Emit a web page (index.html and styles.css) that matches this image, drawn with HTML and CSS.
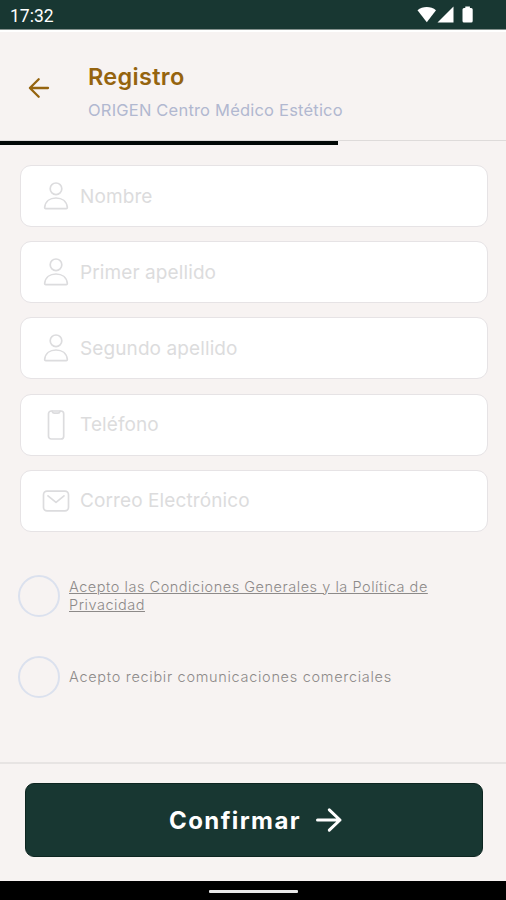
FILE: index.html
```html
<!DOCTYPE html>
<html lang="es">
	<head>
		<meta charset="UTF-8" />
		<meta name="viewport" content="width=device-width, initial-scale=1.0" />
		<title>Registro</title>
		<link rel="stylesheet" href="styles.css">
	</head>
	<body>
		<div class="status-bar">
			<span class="clock">17:32</span>
			<svg class="status-icons" width="57" height="18" viewBox="0 0 57 18">
				<path d="M0.5 4.2C5.5 0 14 0 19 4.2L9.8 16.3Z" />
				<path d="M20.5 16.5L36.5 0.6V16.5Z" />
				<path d="M45.5 3.5a1.5 1.5 0 0 1 1.5-1.5h1.3V0.6h4.6V2h1.3a1.5 1.5 0 0 1 1.5 1.5V15a1.5 1.5 0 0 1-1.5 1.5H47a1.5 1.5 0 0 1-1.5-1.5Z" />
			</svg>
		</div>

		<header class="header">
			<a class="back" href="#" aria-label="Volver">
				<svg width="22" height="22" viewBox="0 0 22 22">
					<path d="M20 11H2M10.7 2.2L1.9 11L10.7 19.8" />
				</svg>
			</a>
			<div class="header-text">
				<h1>Registro</h1>
				<p>ORIGEN Centro Médico Estético</p>
			</div>
		</header>
		<div class="progress"><div class="progress-bar"></div></div>

		<form id="register-form" class="form">
			<label class="field">
				<svg class="icon" width="28" height="32" viewBox="0 0 28 32">
					<circle cx="14" cy="8.8" r="5.8" />
					<path d="M3.8 28.6H24.2Q25.4 28.6 25.3 27.2C24.6 21.4 20 18 14 18S3.4 21.4 2.7 27.2Q2.6 28.6 3.8 28.6Z" />
				</svg>
				<input type="text" placeholder="Nombre" />
			</label>
			<label class="field">
				<svg class="icon" width="28" height="32" viewBox="0 0 28 32">
					<circle cx="14" cy="8.8" r="5.8" />
					<path d="M3.8 28.6H24.2Q25.4 28.6 25.3 27.2C24.6 21.4 20 18 14 18S3.4 21.4 2.7 27.2Q2.6 28.6 3.8 28.6Z" />
				</svg>
				<input type="text" placeholder="Primer apellido" />
			</label>
			<label class="field">
				<svg class="icon" width="28" height="32" viewBox="0 0 28 32">
					<circle cx="14" cy="8.8" r="5.8" />
					<path d="M3.8 28.6H24.2Q25.4 28.6 25.3 27.2C24.6 21.4 20 18 14 18S3.4 21.4 2.7 27.2Q2.6 28.6 3.8 28.6Z" />
				</svg>
				<input type="text" placeholder="Segundo apellido" />
			</label>
			<label class="field">
				<svg class="icon" width="28" height="32" viewBox="0 0 28 32">
					<rect x="6.5" y="2" width="15.2" height="28" rx="2.8" />
					<path d="M10 2.2Q10.8 4.2 12.3 4.2H15.9Q17.4 4.2 18.2 2.2" />
				</svg>
				<input type="tel" placeholder="Teléfono" />
			</label>
			<label class="field">
				<svg class="icon" width="28" height="32" viewBox="0 0 28 32">
					<rect x="1.5" y="6.2" width="25" height="19.6" rx="3.5" />
					<path d="M6 10.8L14 17.3L22 10.8" />
				</svg>
				<input type="email" placeholder="Correo Electrónico" />
			</label>

			<div class="check-row terms">
				<input type="checkbox" id="terms" />
				<label for="terms">Acepto las Condiciones Generales y la Política de<br />Privacidad</label>
			</div>
			<div class="check-row">
				<input type="checkbox" id="news" />
				<label for="news">Acepto recibir comunicaciones comerciales</label>
			</div>
		</form>

		<div class="footer">
			<button type="submit" form="register-form">
				<span>Confirmar</span>
				<svg width="28" height="26" viewBox="0 0 28 26">
					<path d="M2.5 13H25M14.3 2.8L25 13L14.3 23.2" />
				</svg>
			</button>
		</div>
		<div class="nav-bar"><div class="handle"></div></div>
	</body>
</html>
```

FILE: styles.css
```css
* {
	box-sizing: border-box;
}

body {
	margin: 0;
	height: 900px;
	display: flex;
	flex-direction: column;
	font-family: Inter, sans-serif;
	background-color: #f7f3f2;
	overflow: hidden;
}

.status-bar {
	height: 30px;
	flex: none;
	display: flex;
	align-items: center;
	justify-content: space-between;
	padding: 1px 32px 0 10px;
	background-color: #183732;
	border-bottom: 1px solid #84918e;
}

.clock {
	font-family: Roboto, sans-serif;
	font-size: 17.5px;
	color: #fff;
	padding-top: 2px;
}

.status-icons {
	fill: #fff;
}

.header {
	height: 110px;
	flex: none;
	display: flex;
	align-items: flex-start;
	border-top: 2px solid #fff;
}

.back {
	padding: 45px 38px 0 28px;
	height: 70px;
}

.back svg {
	display: block;
	fill: none;
	stroke: #95640f;
	stroke-width: 2.3;
	stroke-linecap: round;
	stroke-linejoin: round;
}

.header-text {
	padding-top: 29px;
}

.header h1 {
	margin: 0;
	font-size: 23.5px;
	line-height: 32px;
	font-weight: 600;
	color: #95640f;
	letter-spacing: 0.3px;
}

.header p {
	margin: 6px 0 0;
	font-size: 16.5px;
	line-height: 22px;
	color: #b1b8d0;
	font-weight: 400;
	letter-spacing: 0.2px;
}

.progress {
	height: 6px;
	flex: none;
	border-top: 1px solid #dedbda;
}

.progress-bar {
	width: 338px;
	height: 4px;
	background-color: #020806;
}

.form {
	flex: 1;
	padding: 19px 18px 0;
}

.field {
	height: 62px;
	margin: 0 0 14.2px 2px;
	padding-left: 21px;
	display: flex;
	align-items: center;
	background-color: #fff;
	border: 1.5px solid #e6e3e5;
	border-radius: 11px;
}

.icon {
	flex: none;
	fill: none;
	stroke: #dcdcde;
	stroke-width: 1.7;
	stroke-linecap: round;
	stroke-linejoin: round;
}

.field input {
	width: 380px;
	padding: 0;
	margin-left: 10px;
	border: none;
	outline: none;
	background: none;
	font-family: inherit;
	font-size: 19px;
	font-weight: 400;
	letter-spacing: 0.1px;
	color: #333;
}

.field input::placeholder {
	color: #dcdcdd;
	opacity: 1;
}

.check-row {
	height: 42px;
	display: flex;
	align-items: center;
	gap: 9px;
}

.check-row input {
	appearance: none;
	flex: none;
	width: 42px;
	height: 42px;
	margin: 0;
	border: 2px solid #dbe1ee;
	border-radius: 50%;
}

.check-row label {
	font-size: 14.5px;
	line-height: 18px;
	font-weight: 300;
	color: #8d8a89;
	letter-spacing: 0.7px;
	white-space: nowrap;
}

.terms {
	margin: 43px 0 39px;
}

.check-row.terms label {
	text-decoration: underline;
	letter-spacing: 0.53px;
}

.footer {
	height: 119px;
	flex: none;
	padding: 19px 23px 0 25px;
	border-top: 2px solid #e7e4e3;
}

.footer button {
	width: 100%;
	height: 74px;
	display: flex;
	align-items: center;
	justify-content: center;
	gap: 14px;
	padding: 0 0 0 4px;
	border: 1px solid #0d2520;
	border-radius: 9px;
	background-color: #183732;
	color: #fff;
	font-family: inherit;
	font-size: 24px;
	font-weight: 700;
	letter-spacing: 1.4px;
	cursor: pointer;
}

.footer svg {
	fill: none;
	stroke: #fff;
	stroke-width: 3;
	stroke-linecap: round;
	stroke-linejoin: round;
}

.nav-bar {
	height: 19px;
	flex: none;
	display: flex;
	justify-content: center;
	padding-top: 9px;
	background-color: #000;
}

.handle {
	width: 89px;
	height: 3px;
	border-radius: 1px;
	background-color: #e8e8e8;
}
```
